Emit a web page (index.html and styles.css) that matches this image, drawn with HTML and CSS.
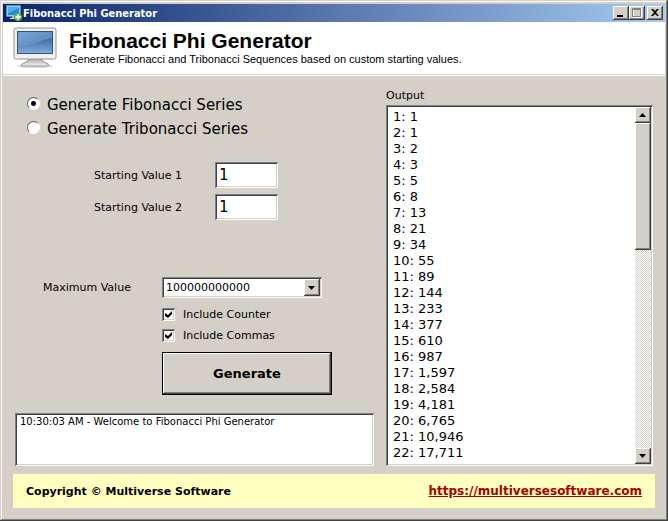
FILE: index.html
```
<!DOCTYPE html>
<html lang="en">
<head>
    <meta charset="UTF-8">
    <meta name="viewport" content="width=device-width, initial-scale=1.0">
    <title>Fibonacci Phi Generator</title>
    <link rel="stylesheet" href="styles.css">
</head>
<body>
    <div class="window">
        <div class="titlebar">
            <svg class="title-icon" viewBox="0 0 16 16" width="16" height="16">
                <rect x="1" y="1" width="13" height="10" fill="#4fb4ee" stroke="#c9e6f5"/>
                <path d="M2 8L13 3V10H2Z" fill="#2b86d6"/>
                <path d="M6 11h4v2H6z" fill="#9fb2c0"/>
                <path d="M4 13h8v1H4z" fill="#dfe8ee"/>
                <circle cx="12" cy="12" r="4" fill="#5cb531"/>
                <path d="M12 9.500v5M9.500 12h5" stroke="#fff" stroke-width="2"/>
            </svg>
            <span class="title-text">Fibonacci Phi Generator</span>
            <div class="title-buttons">
                <button class="title-button" aria-label="Minimize">
                    <svg viewBox="0 0 12 10" width="12" height="10"><path d="M2 7h6v2H2z"/></svg>
                </button>
                <button class="title-button" aria-label="Maximize" disabled>
                    <svg viewBox="0 0 12 10" width="12" height="10">
                        <path d="M2.500 2v7.500h8V1" fill="none" stroke="#fff"/>
                        <path d="M1.500 .500h8v8h-8zM1 1.500h9" fill="none" stroke="#808080"/>
                    </svg>
                </button>
                <button class="title-button close" aria-label="Close">
                    <svg viewBox="0 0 12 10" width="12" height="10"><path d="M2 1h2l2 2 2-2h2L7 4.500 10 8H8L6 6 4 8H2l3-3.500z"/></svg>
                </button>
            </div>
        </div>

        <header class="header">
            <svg class="logo" viewBox="0 0 44 42" width="44" height="42">
                <defs>
                    <linearGradient id="screen" x1="0" y1="0" x2="1" y2="1">
                        <stop offset="0" stop-color="#7ba6d4"/>
                        <stop offset="1" stop-color="#4d7db5"/>
                    </linearGradient>
                    <linearGradient id="shine" x1="0" y1="0" x2="0" y2="1">
                        <stop offset="0" stop-color="#3c6ba6"/>
                        <stop offset="1" stop-color="#7eabd9"/>
                    </linearGradient>
                    <linearGradient id="stand" x1="0" y1="0" x2="0" y2="1">
                        <stop offset="0" stop-color="#9a9a98"/>
                        <stop offset="1" stop-color="#f2f2f0"/>
                    </linearGradient>
                </defs>
                <ellipse cx="22" cy="39" rx="18" ry="2" fill="#d8d8d6"/>
                <path d="M15 30h14v4l6 3q2 2-1 2H10q-3 0-1-2l6-3z" fill="url(#stand)" stroke="#959593"/>
                <rect x="1" y="1" width="42" height="31" rx="2" fill="#f1f1ef" stroke="#969694"/>
                <rect x="4.500" y="4.500" width="35" height="22" fill="url(#screen)" stroke="#31547f"/>
                <path d="M5 19Q16 19 25 15Q32 12 39 11V26H5Z" fill="url(#shine)"/>
            </svg>
            <div>
                <h1 class="heading">Fibonacci Phi Generator</h1>
                <p class="subheading">Generate Fibonacci and Tribonacci Sequences based on custom starting values.</p>
            </div>
        </header>

        <main class="content">
            <form class="settings">
                <div class="series">
                    <label class="series-option"><input type="radio" name="series" class="radio" checked>Generate Fibonacci Series</label>
                    <label class="series-option"><input type="radio" name="series" class="radio">Generate Tribonacci Series</label>
                </div>

                <div class="starting">
                    <label for="start1">Starting Value 1</label>
                    <input type="text" id="start1" class="number sunken" value="1">
                    <label for="start2">Starting Value 2</label>
                    <input type="text" id="start2" class="number sunken" value="1">
                </div>

                <div class="maximum">
                    <label for="max">Maximum Value</label>
                    <div class="combo">
                        <select id="max" class="select sunken">
                            <option>100000000000</option>
                        </select>
                        <span class="combo-arrow"><svg viewBox="0 0 8 4" width="8" height="4"><path d="M0 0h7L3.500 4z"/></svg></span>
                    </div>
                    <div class="options">
                        <label class="option"><input type="checkbox" class="checkbox" checked>Include Counter</label>
                        <label class="option"><input type="checkbox" class="checkbox" checked>Include Commas</label>
                        <button type="button" class="generate">Generate</button>
                    </div>
                </div>

                <textarea class="log sunken" aria-label="Log" readonly>10:30:03 AM - Welcome to Fibonacci Phi Generator</textarea>
            </form>

            <section class="output">
                <label for="output">Output</label>
                <div class="output-box sunken">
                    <textarea id="output" class="output-text" readonly>
1: 1
2: 1
3: 2
4: 3
5: 5
6: 8
7: 13
8: 21
9: 34
10: 55
11: 89
12: 144
13: 233
14: 377
15: 610
16: 987
17: 1,597
18: 2,584
19: 4,181
20: 6,765
21: 10,946
22: 17,711</textarea>
                    <div class="scrollbar">
                        <button class="scroll-button" aria-label="Scroll up"><svg viewBox="0 0 8 4" width="8" height="4"><path d="M0 4h7L3.500 0z"/></svg></button>
                        <div class="scroll-track"><div class="scroll-thumb"></div></div>
                        <button class="scroll-button" aria-label="Scroll down"><svg viewBox="0 0 8 4" width="8" height="4"><path d="M0 0h7L3.500 4z"/></svg></button>
                    </div>
                </div>
            </section>
        </main>

        <footer class="footer">
            <span>Copyright © Multiverse Software</span>
            <a href="https://multiversesoftware.com">https://multiversesoftware.com</a>
        </footer>
    </div>
</body>
</html>
```
FILE: styles.css
```
* {
    box-sizing: border-box;
}

body {
    margin: 0;
    font-family: Verdana, 'DejaVu Sans', sans-serif;
    font-size: 11px;
    color: #000;
    background: #d4d0c8;
}

button, input, select, textarea {
    margin: 0;
    font-family: inherit;
    color: inherit;
    border-radius: 0;
    outline: none;
}

svg {
    display: block;
}

.window {
    display: flex;
    flex-direction: column;
    min-height: 100vh;
    padding: 4px 3px 13px;
    background: #d4d0c8;
    box-shadow: inset -1px -1px #404040, inset 1px 1px #d4d0c8, inset -2px -2px #808080, inset 2px 2px #fff;
}

.titlebar {
    display: flex;
    align-items: center;
    height: 18px;
    padding: 0 2px 0 3px;
    background: linear-gradient(to right, #0a246a, #a6caf0);
}

.title-text {
    flex: 1;
    padding-left: 1px;
    font-family: Tahoma, 'DejaVu Sans Condensed', sans-serif;
    font-weight: bold;
    color: #fff;
}

.title-buttons {
    display: flex;
}

.title-button,
.scroll-button,
.combo-arrow {
    display: flex;
    align-items: center;
    justify-content: center;
    width: 16px;
    height: 14px;
    padding: 0;
    border: none;
    background: #d4d0c8;
    box-shadow: inset -1px -1px #404040, inset 1px 1px #fff, inset -2px -2px #808080;
}

.title-button.close {
    margin-left: 2px;
}

.header {
    display: flex;
    gap: 12px;
    height: 54px;
    padding: 5px 10px;
    background: #fff;
    border-bottom: 1px solid #fff;
    box-shadow: inset 0 -1px #d4d0c8;
}

.heading {
    margin: 2px 0 0;
    font: bold 21px/24px Arial, 'Liberation Sans', sans-serif;
}

.subheading {
    margin: 0;
    font: 11px/12px Arial, 'Liberation Sans', sans-serif;
}

.content {
    display: grid;
    grid-template-columns: 1fr 267px;
    gap: 12px;
    flex: 1;
    padding: 13px 12px 8px;
}

.sunken {
    border: none;
    background: #fff;
    box-shadow: inset 1px 1px #808080, inset -1px -1px #fff, inset 2px 2px #404040, inset -2px -2px #d4d0c8;
}

.settings {
    display: flex;
    flex-direction: column;
}

.series {
    padding: 4px 12px 0;
}

.series-option {
    display: flex;
    align-items: center;
    gap: 7px;
    height: 24px;
    font-size: 15px;
}

.radio {
    appearance: none;
    width: 13px;
    height: 13px;
    margin-bottom: 4px;
    border: 1px solid;
    border-color: #606060 #fff #fff #606060;
    border-radius: 50%;
    background: #fff;
}

.radio:checked {
    background: radial-gradient(circle, #000 2px, #fff 3px);
}

.starting {
    display: grid;
    grid-template-columns: 92px 63px;
    align-items: center;
    gap: 6px 29px;
    padding: 21px 0 0 79px;
}

.number {
    height: 26px;
    padding: 2px 4px;
    font-size: 15px;
}

.maximum {
    display: grid;
    grid-template-columns: 91px 170px;
    align-items: center;
    column-gap: 28px;
    padding: 57px 0 18px 28px;
}

.combo {
    position: relative;
    width: 160px;
}

.select {
    appearance: none;
    display: block;
    width: 100%;
    height: 21px;
    padding: 0 20px 0 4px;
    font-size: 11px;
}

.combo-arrow {
    position: absolute;
    top: 2px;
    right: 2px;
    height: 17px;
    pointer-events: none;
}

.options {
    grid-column: 2;
    padding-top: 6px;
}

.option {
    display: flex;
    align-items: center;
    gap: 8px;
    height: 21px;
}

.checkbox {
    appearance: none;
    width: 13px;
    height: 13px;
    background: #fff;
    box-shadow: inset 1px 1px #808080, inset -1px -1px #fff, inset 2px 2px #404040, inset -2px -2px #d4d0c8;
}

.checkbox:checked::before {
    content: "";
    display: block;
    width: 7px;
    height: 7px;
    margin: 3px;
    background: #000;
    clip-path: polygon(0 2px, 3px 4px, 7px 0, 7px 3px, 3px 7px, 0 5px);
}

.generate {
    width: 170px;
    height: 43px;
    margin-top: 6px;
    border: 1px solid #000;
    background: #d4d0c8;
    box-shadow: inset -1px -1px #404040, inset 1px 1px #fff, inset -2px -2px #808080;
    font-size: 13px;
    font-weight: bold;
}

.log {
    flex: 1;
    width: 100%;
    min-height: 52px;
    padding: 3px 5px;
    font-size: 10px;
    resize: none;
    overflow: hidden;
}

.output {
    display: flex;
    flex-direction: column;
    gap: 3px;
}

.output-box {
    display: flex;
    flex: 1;
    padding: 2px;
}

.output-text {
    flex: 1;
    min-width: 0;
    min-height: 354px;
    padding: 2px 5px 0;
    border: none;
    background: transparent;
    font-size: 13px;
    line-height: 16px;
    resize: none;
    overflow: hidden;
}

.scrollbar {
    display: flex;
    flex-direction: column;
    width: 16px;
}

.scroll-button {
    height: 16px;
}

.scroll-track {
    flex: 1;
    background: repeating-conic-gradient(#fff 0 25%, #d4d0c8 0 50%) 0 0 / 2px 2px;
}

.scroll-thumb {
    height: 39%;
    background: #d4d0c8;
    box-shadow: inset -1px -1px #404040, inset 1px 1px #fff, inset -2px -2px #808080;
}

.footer {
    display: flex;
    align-items: center;
    justify-content: space-between;
    height: 34px;
    margin: 0 10px;
    padding: 0 13px;
    background: #ffffc0;
    font-weight: bold;
}

.footer a {
    font-size: 12px;
    color: #a80000;
}
```
